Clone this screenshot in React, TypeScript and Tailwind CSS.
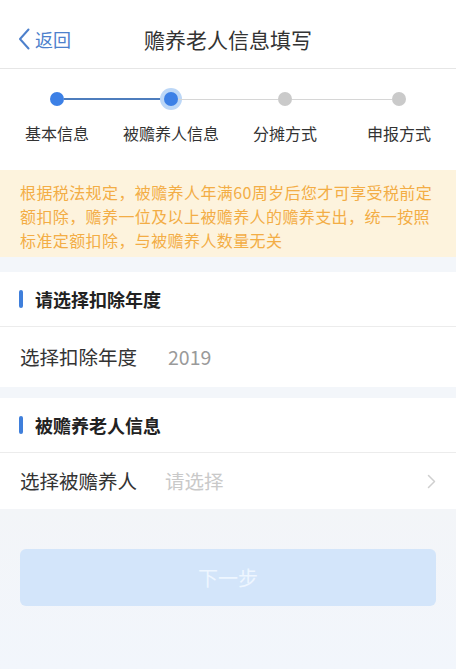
const steps = ["基本信息", "被赡养人信息", "分摊方式", "申报方式"];

function SectionTitle({ title }: { title: string }) {
  return (
    <div className="flex h-[55px] items-center border-b border-[#ececec] pl-[19px]">
      <span className="h-[18px] w-[4px] rounded-sm bg-[#3f7fdb]" />
      <span className="ml-[12px] text-[18px] font-bold text-[#222]">{title}</span>
    </div>
  );
}

export default function App() {
  return (
    <div
      className="flex min-h-[669px] w-[456px] flex-col bg-[#f3f6fa]"
      style={{ fontFamily: '"Noto Sans CJK SC", "Noto Sans", sans-serif' }}
    >
      {/* header */}
      <div className="relative flex h-[69px] items-center justify-center border-b border-[#e6e6e6] bg-white">
        <div className="absolute left-[18px] top-[28px] flex items-center text-[#4d80cc]">
          <svg width="12" height="22" viewBox="0 0 12 22" fill="none">
            <path d="M10.5 1.5 L2 11 L10.5 20.5" stroke="#4d80cc" strokeWidth="2" strokeLinecap="round" strokeLinejoin="round" />
          </svg>
          <span className="ml-[5px] text-[18px] leading-none">返回</span>
        </div>
        <span className="pt-[12px] text-[21px] text-[#333]">赡养老人信息填写</span>
      </div>

      {/* steps */}
      <div className="h-[101px] bg-white pt-[23px]">
        <div className="flex items-center px-[50px]">
          <span className="h-[14px] w-[14px] rounded-full bg-[#3c80e6]" />
          <span className="h-[2px] flex-1 bg-[#4d7dbd]" />
          <span className="h-[14px] w-[14px] rounded-full bg-[#3c80e6] ring-4 ring-[#bcd7f7]" />
          <span className="h-[1px] flex-1 bg-[#d6d6d6]" />
          <span className="h-[14px] w-[14px] rounded-full bg-[#cacaca]" />
          <span className="h-[1px] flex-1 bg-[#d6d6d6]" />
          <span className="h-[14px] w-[14px] rounded-full bg-[#cacaca]" />
        </div>
        <div className="mt-[15px] grid grid-cols-4">
          {steps.map((s) => (
            <span key={s} className="text-center text-[16px] text-[#333]">
              {s}
            </span>
          ))}
        </div>
      </div>

      {/* notice */}
      <div className="h-[87px] bg-[#fdf3dd] px-[20px] pt-[10px] text-[16px] leading-[24px] tracking-[0.4px] text-[#f3ad45]">
        根据税法规定，被赡养人年满60周岁后您才可享受税前定额扣除，赡养一位及以上被赡养人的赡养支出，统一按照标准定额扣除，与被赡养人数量无关
      </div>

      {/* year */}
      <div className="mt-[15px] bg-white">
        <SectionTitle title="请选择扣除年度" />
        <div className="flex h-[60px] items-center px-[20px] text-[19.5px]">
          <span className="w-[148px] text-[#333]">选择扣除年度</span>
          <span className="text-[#9a9a9a]">2019</span>
        </div>
      </div>

      {/* elderly */}
      <div className="mt-[11px] bg-white">
        <SectionTitle title="被赡养老人信息" />
        <div className="flex h-[56px] items-center pl-[20px] pr-[20px] text-[19.5px]">
          <span className="w-[145px] text-[#333]">选择被赡养人</span>
          <span className="flex-1 text-[#c9c9c9]">请选择</span>
          <svg width="9" height="15" viewBox="0 0 9 15" fill="none">
            <path d="M1.5 1.5 L7.5 7.5 L1.5 13.5" stroke="#cfcfcf" strokeWidth="1.5" strokeLinecap="round" strokeLinejoin="round" />
          </svg>
        </div>
      </div>

      <div className="flex-1 bg-gradient-to-b from-[#f3f5f8] to-[#f2f6fc] px-[20px] pt-[40px]">
        <button className="h-[57px] w-full rounded-md bg-[#d3e5fa] text-[20px] text-[#eef6ff]">下一步</button>
      </div>
    </div>
  );
}
